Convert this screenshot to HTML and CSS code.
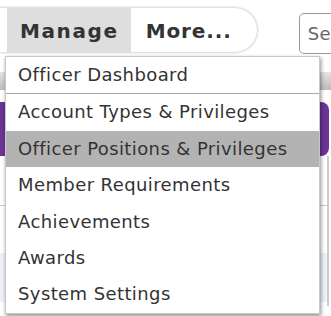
FILE: index.html
```html
<!DOCTYPE html>
<html lang="en">
<head>
    <meta charset="UTF-8">
    <meta name="viewport" content="width=device-width, initial-scale=1.0">
    <title>Manage</title>
    <link rel="stylesheet" href="styles.css">
</head>
<body>
    <header class="topbar">
        <nav class="nav">
            <a class="nav-item active" href="#">Manage</a>
            <a class="nav-item" href="#">More...</a>
        </nav>
        <input class="search" type="text" placeholder="Search">
    </header>

    <!-- page content behind the open menu -->
    <main class="content">
        <div class="strip"></div>
        <div class="panel"></div>
        <div class="lower">
            <div class="rule"></div>
            <div class="band"></div>
        </div>
    </main>

    <ul class="dropdown">
        <li class="sep"><a href="#">Officer Dashboard</a></li>
        <li><a href="#">Account Types &amp; Privileges</a></li>
        <li class="hover"><a href="#">Officer Positions &amp; Privileges</a></li>
        <li><a href="#">Member Requirements</a></li>
        <li><a href="#">Achievements</a></li>
        <li><a href="#">Awards</a></li>
        <li><a href="#">System Settings</a></li>
    </ul>
</body>
</html>
```

FILE: styles.css
```css
html, body {
    height: 100%;
}
body {
    margin: 0;
    font-family: "DejaVu Sans", Verdana, sans-serif;
    background: #fff;
    color: #333;
    overflow: hidden;
}
a {
    color: inherit;
    text-decoration: none;
}
.topbar {
    display: flex;
    align-items: flex-start;
    height: 62px;
    padding-top: 8px;
    box-sizing: border-box;
    overflow: hidden;
}
.nav {
    display: flex;
    flex-shrink: 0;
    height: 44px;
    background: #fff;
    padding: 0 13px 0 7px;
    border-radius: 0 22px 22px 0;
    box-shadow: 0 0 3px rgba(0, 0, 0, 0.35);
}
.nav-item {
    font-weight: bold;
    font-size: 20px;
    letter-spacing: 0.9px;
    line-height: 41px;
    padding: 3px 12px 0 15px;
}
.nav-item.active {
    background: #dedede;
    letter-spacing: 1.6px;
    padding: 3px 12px 0 13px;
}
.search {
    flex-shrink: 0;
    margin: 5px 0 0 42px;
    height: 41px;
    width: 120px;
    box-sizing: border-box;
    border: 1px solid #999;
    border-radius: 5px;
    padding: 0 8px;
    font: 18px "DejaVu Sans", Verdana, sans-serif;
    letter-spacing: 0.4px;
    color: #555;
}
.search::placeholder {
    color: #666;
}
.content {
    display: flex;
    flex-direction: column;
}
.strip {
    margin-top: 10px;
    height: 18px;
    background: linear-gradient(#e4e4e4, #bcbcbc);
}
.panel {
    margin: 12px 2px 0 -10px;
    height: 54px;
    background: #6b3495;
    border-radius: 8px;
}
.lower {
    margin-right: 2px;
    border-right: 2px solid #ccc;
    height: 150px;
}
.rule {
    margin-top: 49px;
    border-top: 1px solid #ccc;
}
.band {
    margin-top: 47px;
    height: 49px;
    background: #eef2f8;
}
.dropdown {
    position: absolute;
    top: 56px;
    left: 5px;
    width: 313px;
    margin: 0;
    padding: 0;
    list-style: none;
    background: #fff;
    border: 1px solid #c8c8c8;
    box-shadow: 1px 2px 4px rgba(0, 0, 0, 0.45);
}
.dropdown li a {
    display: block;
    font-size: 18px;
    letter-spacing: 0.4px;
    line-height: 22.4px;
    padding: 7px 12px;
    white-space: nowrap;
}
.dropdown li.sep {
    border-bottom: 1px solid #aaa;
}
.dropdown li.hover {
    background: #b3b3b3;
}
```
